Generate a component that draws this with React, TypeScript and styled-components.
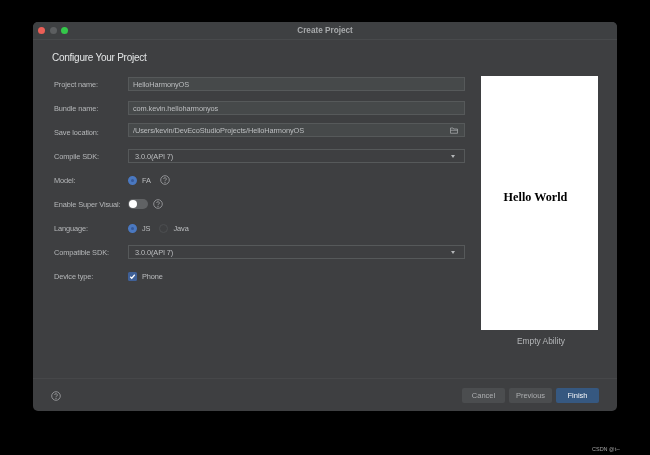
import React from 'react'
import styled, { createGlobalStyle } from 'styled-components'

const GlobalStyle = createGlobalStyle`
  html, body {
    margin: 0;
    padding: 0;
    background: #000;
    font-family: "Liberation Sans", Arial, sans-serif;
  }
`

const Page = styled.div`
  position: relative;
  width: 650px;
  height: 455px;
  padding: 22px 33px 0;
  box-sizing: border-box;
  overflow: hidden;
  background: #000;
  filter: blur(0.3px);
`
const Window = styled.div`
  width: 584px;
  height: 389px;
  display: flex;
  flex-direction: column;
  border-radius: 5px;
  background: #3e3f41;
  overflow: hidden;
`
const TitleBar = styled.div`
  position: relative;
  flex: none;
  height: 18px;
  display: flex;
  align-items: center;
  justify-content: center;
  background: #3e4042;
  border-bottom: 1px solid #484a4c;
  box-sizing: border-box;
`
const Lights = styled.div`
  position: absolute;
  left: 5px;
  top: 5px;
  display: flex;
  gap: 4.7px;
`
const Light = styled.span<{ $color: string }>`
  width: 7px;
  height: 7px;
  border-radius: 50%;
  background: ${(p) => p.$color};
`
const Title = styled.div`
  font-size: 8.2px;
  font-weight: 700;
  color: #a8aaac;
`
const Body = styled.div`
  flex: 1;
  display: flex;
  min-height: 0;
  border-bottom: 1px solid #464749;
`
const FormSide = styled.div`
  width: 448px;
  flex: none;
  box-sizing: border-box;
  padding: 11px 0 0 19px;
`
const Heading = styled.h1`
  margin: 0 0 7px;
  font-size: 10px;
  letter-spacing: -0.25px;
  line-height: 14px;
  font-weight: 400;
  color: #e4e6e7;
`
const Row = styled.div`
  height: 24px;
  display: flex;
  align-items: center;
  padding-left: 2px;
`
const Label = styled.div`
  width: 74px;
  flex: none;
  font-size: 7.4px;
  letter-spacing: -0.12px;
  color: #b6b8ba;
  white-space: nowrap;
`
const Field = styled.div<{ $raised?: boolean }>`
  width: 337px;
  height: 14px;
  box-sizing: border-box;
  display: flex;
  align-items: center;
  justify-content: space-between;
  padding: 1px 6px 0 4px;
  margin-bottom: ${(p) => (p.$raised ? 4 : 0)}px;
  background: #46494a;
  border: 1px solid #56595a;
  font-size: 7.4px;
  letter-spacing: -0.1px;
  color: #bcbec0;
`
const Select = styled(Field)`
  background: #3e3f41;
  padding: 1px 9px 0 6px;
`
const Arrow = styled.span`
  width: 0;
  height: 0;
  border-left: 2.5px solid transparent;
  border-right: 2.5px solid transparent;
  border-top: 3px solid #b4b6b8;
`
const Radio = styled.span<{ $on?: boolean; $gap?: number }>`
  width: 9px;
  height: 9px;
  flex: none;
  box-sizing: border-box;
  border-radius: 50%;
  margin-left: ${(p) => p.$gap ?? 0}px;
  background: ${(p) => (p.$on ? '#35599a' : '#3e3f41')};
  border: ${(p) => (p.$on ? '3px solid #4a78c0' : '1px solid #4d4f51')};
`
const OptionText = styled.span`
  margin-left: 5px;
  padding-top: 1px;
  font-size: 7.4px;
  letter-spacing: -0.1px;
  color: #bcbec0;
`
const Switch = styled.span`
  width: 20px;
  height: 10px;
  flex: none;
  display: flex;
  align-items: center;
  padding-left: 1px;
  box-sizing: border-box;
  border-radius: 5px;
  background: #606264;
`
const Knob = styled.span`
  width: 8px;
  height: 8px;
  border-radius: 50%;
  background: #fff;
`
const Check = styled.span`
  width: 9px;
  height: 9px;
  flex: none;
  display: flex;
  align-items: center;
  justify-content: center;
  border-radius: 1.5px;
  background: #3f6097;
`
const HelpWrap = styled.span<{ $gap: number }>`
  display: flex;
  margin-left: ${(p) => p.$gap}px;
`
const PreviewSide = styled.div`
  flex: 1;
  display: flex;
  flex-direction: column;
  padding: 36px 0 0 0;
`
const Preview = styled.div`
  width: 117px;
  height: 254px;
  box-sizing: border-box;
  padding: 0 8px 11px 0;
  display: flex;
  align-items: center;
  justify-content: center;
  background: #fff;
  font-family: "Liberation Serif", "Times New Roman", serif;
  font-size: 12.2px;
  font-weight: 700;
  color: #000;
`
const Caption = styled.div`
  width: 120px;
  margin-top: 6px;
  text-align: center;
  font-size: 8.4px;
  line-height: 11px;
  color: #b4b6b8;
`
const Footer = styled.div`
  flex: none;
  height: 32px;
  display: flex;
  align-items: center;
  justify-content: space-between;
  padding: 1px 18px 0 18px;
  box-sizing: border-box;
`
const Buttons = styled.div`
  display: flex;
  gap: 4px;
`
const Button = styled.button<{ $primary?: boolean }>`
  width: 43px;
  height: 15px;
  padding: 0;
  border: none;
  border-radius: 2px;
  font-family: inherit;
  font-size: 7.5px;
  background: ${(p) => (p.$primary ? '#365880' : '#4b4d4f')};
  color: ${(p) => (p.$primary ? '#f4f6f9' : '#adafb1')};
`
const Watermark = styled.div`
  position: absolute;
  left: 592px;
  top: 446px;
  font-size: 5.5px;
  color: #a4a4a4;
  white-space: nowrap;
`

const Help = () => (
  <svg width="10" height="10" viewBox="0 0 20 20" fill="none" stroke="#a4a6a8" strokeWidth="1.6">
    <circle cx="10" cy="10" r="8.6" />
    <path d="M7.4 8a2.6 2.6 0 1 1 3.9 2.2c-.9.5-1.3 1-1.3 2" />
    <circle cx="10" cy="14.6" r=".5" />
  </svg>
)

const Folder = () => (
  <svg width="8" height="7" viewBox="0 0 16 14" fill="none" stroke="#aeb0b2" strokeWidth="1.4">
    <path d="M1 12.500V2h5l1.500 2H15v8.500z" />
    <path d="M1 6.500h14" />
  </svg>
)

const Tick = () => (
  <svg width="7" height="7" viewBox="0 0 14 14" fill="none" stroke="#fff" strokeWidth="2.4">
    <path d="M2.500 7.500l3 3 6-7" />
  </svg>
)

export default function App() {
  return (
    <Page>
      <GlobalStyle />
      <Window>
        <TitleBar>
          <Lights>
            <Light $color="#ec5f57" />
            <Light $color="#5c5e60" />
            <Light $color="#34c84a" />
          </Lights>
          <Title>Create Project</Title>
        </TitleBar>
        <Body>
          <FormSide>
            <Heading>Configure Your Project</Heading>
            <Row>
              <Label>Project name:</Label>
              <Field>HelloHarmonyOS</Field>
            </Row>
            <Row>
              <Label>Bundle name:</Label>
              <Field>com.kevin.helloharmonyos</Field>
            </Row>
            <Row>
              <Label>Save location:</Label>
              <Field $raised>
                /Users/kevin/DevEcoStudioProjects/HelloHarmonyOS
                <Folder />
              </Field>
            </Row>
            <Row>
              <Label>Compile SDK:</Label>
              <Select>
                3.0.0(API 7)
                <Arrow />
              </Select>
            </Row>
            <Row>
              <Label>Model:</Label>
              <Radio $on />
              <OptionText>FA</OptionText>
              <HelpWrap $gap={9}>
                <Help />
              </HelpWrap>
            </Row>
            <Row>
              <Label>Enable Super Visual:</Label>
              <Switch>
                <Knob />
              </Switch>
              <HelpWrap $gap={5}>
                <Help />
              </HelpWrap>
            </Row>
            <Row>
              <Label>Language:</Label>
              <Radio $on />
              <OptionText>JS</OptionText>
              <Radio $gap={9} />
              <OptionText>Java</OptionText>
            </Row>
            <Row>
              <Label>Compatible SDK:</Label>
              <Select>
                3.0.0(API 7)
                <Arrow />
              </Select>
            </Row>
            <Row>
              <Label>Device type:</Label>
              <Check>
                <Tick />
              </Check>
              <OptionText>Phone</OptionText>
            </Row>
          </FormSide>
          <PreviewSide>
            <Preview>Hello World</Preview>
            <Caption>Empty Ability</Caption>
          </PreviewSide>
        </Body>
        <Footer>
          <Help />
          <Buttons>
            <Button>Cancel</Button>
            <Button>Previous</Button>
            <Button $primary>Finish</Button>
          </Buttons>
        </Footer>
      </Window>
      <Watermark>CSDN @t--</Watermark>
    </Page>
  )
}
